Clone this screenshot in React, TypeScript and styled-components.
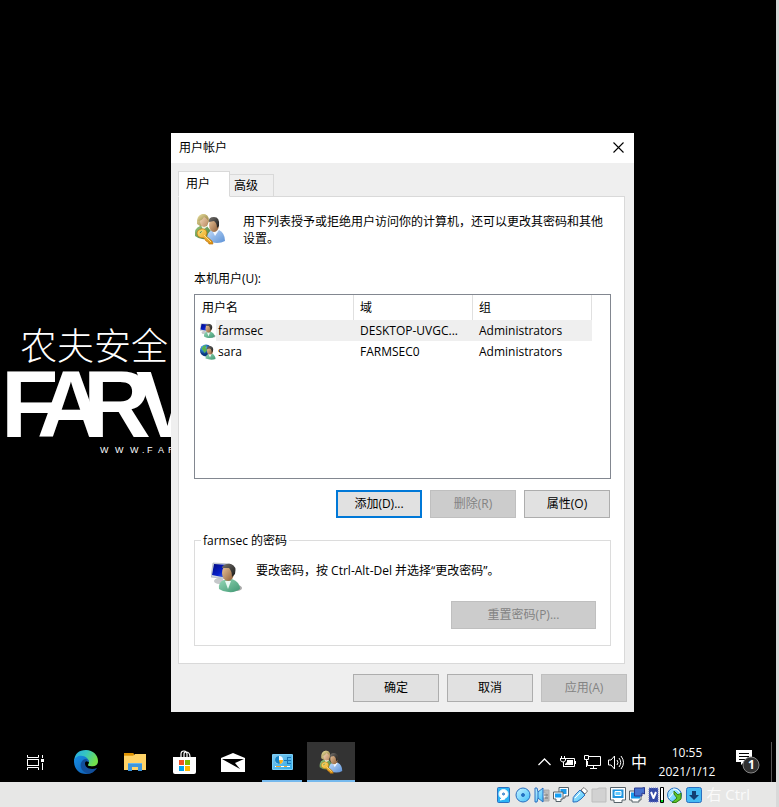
import React, { useState } from "react";
import styled, { createGlobalStyle, css } from "styled-components";

const GlobalStyle = createGlobalStyle`
  *, *::before, *::after { box-sizing: border-box; }
  body {
    margin: 0;
    background: #000;
    font-family: "Open Sans", "Noto Sans CJK SC", sans-serif;
    font-size: 12px;
    line-height: 17px;
    color: #000;
  }
  button { font: inherit; color: inherit; }
  svg { display: block; flex: none; }
`;

/* ---------- frame ---------- */

const Screen = styled.div`
  display: flex;
  flex-direction: column;
  min-height: 100vh;
  background: #000;
  border-right: 3px solid #d9d9d9;
`;

const Desktop = styled.main`
  position: relative;
  flex: 1;
  overflow: hidden;
`;

const Wallpaper = styled.svg`
  position: absolute;
  left: 0;
  top: 300px;
`;

const WallpaperText = styled.text<{ $size: number; $weight: number; $cjk?: boolean }>`
  font-family: ${(p) => (p.$cjk ? '"Noto Sans CJK SC"' : '"Liberation Sans"')}, sans-serif;
  font-size: ${(p) => p.$size}px;
  font-weight: ${(p) => p.$weight};
  fill: #fff;
`;

/* ---------- dialog ---------- */

const Dialog = styled.section`
  position: absolute;
  left: 171px;
  top: 133px;
  width: 463px;
  display: flex;
  flex-direction: column;
  background: #efefef;
`;

const TitleBar = styled.header`
  display: flex;
  align-items: center;
  justify-content: space-between;
  height: 30px;
  padding: 0 1px 2px 8px;
  background: #fff;
`;

const Title = styled.h1`
  margin: 0;
  font-size: 12px;
  font-weight: 400;
`;

const CloseButton = styled.button`
  display: flex;
  align-items: center;
  justify-content: center;
  width: 29px;
  height: 28px;
  padding: 0;
  border: 0;
  background: transparent;
`;

const DialogBody = styled.div`
  display: flex;
  flex-direction: column;
  padding: 8px 7px 10px;
`;

const Tabs = styled.div`
  display: flex;
  align-items: flex-end;
  height: 26px;
`;

const Tab = styled.button<{ $active?: boolean }>`
  display: flex;
  align-items: center;
  height: 23px;
  padding: 0 15px 0 4px;
  border: 1px solid #d9d9d9;
  border-left-width: 0;
  background: #efefef;
  ${(p) =>
    p.$active &&
    css`
      z-index: 1;
      height: 26px;
      padding: 0 19px 1px 7px;
      border-left-width: 1px;
      border-bottom-color: #fff;
      background: #fff;
    `}
`;

const Panel = styled.div`
  display: flex;
  flex-direction: column;
  margin: -1px 2px 0 0;
  padding: 16px 13px 17px 15px;
  border: 1px solid #d9d9d9;
  background: #fff;
`;

const Intro = styled.div`
  display: flex;
  gap: 17px;
  margin-bottom: 23px;
`;

const Paragraph = styled.p`
  margin: 0;
`;

const ListLabel = styled.h2`
  margin: 0 0 7px;
  font-size: 12px;
  font-weight: 400;
`;

const ListBox = styled.div`
  height: 185px;
  border: 1px solid #828790;
  background: #fff;
`;

const UserTable = styled.table`
  width: 397px;
  table-layout: fixed;
  border-collapse: separate;
  border-spacing: 0;
`;

const HeadCell = styled.th<{ $width: number }>`
  width: ${(p) => p.$width}px;
  height: 25px;
  padding: 0 6px;
  border-right: 1px solid #e0e0e0;
  font-weight: 400;
  text-align: left;
  &:first-child { padding-left: 7px; }
`;

const Cell = styled.td<{ $selected: boolean }>`
  height: 21px;
  padding: 0 6px;
  overflow: hidden;
  white-space: nowrap;
  background: ${(p) => (p.$selected ? "#efefef" : "#fff")};
  &:first-child { padding: 0; background: #fff; }
`;

const UserName = styled.div<{ $selected: boolean }>`
  display: flex;
  align-items: center;
  gap: 2px;
  height: 21px;
  margin-left: 5px;
  background: ${(p) => (p.$selected ? "linear-gradient(to right, #fff 16px, #efefef 16px)" : "#fff")};
`;

const ButtonRow = styled.div<{ $place: "list" | "group" | "footer" }>`
  display: flex;
  justify-content: flex-end;
  gap: 8px;
  margin: ${(p) => ({ list: "11px 1px 14px 0", group: "0", footer: "10px 0 0" })[p.$place]};
`;

const PushButton = styled.button<{ $default?: boolean; $wide?: boolean }>`
  width: ${(p) => (p.$wide ? 145 : 86)}px;
  height: 28px;
  padding: 0 0 1px;
  border: ${(p) => (p.$default ? "2px solid #0078d7" : "1px solid #adadad")};
  background: #e1e1e1;
  &:disabled {
    border-color: #bfbfbf;
    background: #ccc;
    color: #838383;
  }
`;

const PasswordGroup = styled.fieldset`
  min-width: 0;
  margin: 0;
  padding: 13px 14px 16px 16px;
  border: 1px solid #dcdcdc;
`;

const Legend = styled.legend`
  margin-left: -10px;
  padding: 0 2px;
`;

const PasswordInfo = styled.div`
  display: flex;
  gap: 13px;
  margin-bottom: 7px;
`;

/* ---------- taskbar ---------- */

const Taskbar = styled.nav`
  display: flex;
  align-items: stretch;
  height: 40px;
  padding-left: 10px;
  background: #000;
  color: #fff;
`;

const TaskButton = styled.button<{ $state?: "open" | "active"; $wide?: boolean }>`
  display: flex;
  align-items: center;
  justify-content: center;
  width: ${(p) => (p.$wide ? 51 : 48)}px;
  margin-right: 1px;
  padding: 0;
  border: 0;
  background: ${(p) =>
    p.$state === "active"
      ? "linear-gradient(to top, #76b9ed 2px, #333 2px)"
      : p.$state === "open"
        ? "linear-gradient(#76b9ed, #76b9ed) center bottom / 40px 2px no-repeat"
        : "transparent"};
`;

const Tray = styled.div`
  display: flex;
  align-items: center;
  margin-left: auto;
`;

const TrayButton = styled.button<{ $width?: number }>`
  display: flex;
  align-items: center;
  justify-content: center;
  width: ${(p) => p.$width ?? 24}px;
  height: 40px;
  padding: 0;
  border: 0;
  background: transparent;
  font-size: 16px;
`;

const Clock = styled.time`
  width: 74px;
  line-height: 19px;
  text-align: center;
`;

const ShowDesktop = styled.button`
  width: 5px;
  height: 40px;
  padding: 0;
  border: 0;
  border-left: 1px solid #555;
  background: #000;
`;

const StatusBar = styled.footer`
  display: flex;
  align-items: center;
  justify-content: flex-end;
  gap: 3px;
  height: 25px;
  padding-right: 26px;
  background: #e7e7e6;
`;

const HostKey = styled.span`
  margin-left: 1px;
  color: #fafafa;
  font-size: 15px;
`;

/* ---------- icons ---------- */

const Defs = () => (
  <svg width="0" height="0" aria-hidden="true">
    <defs>
      <linearGradient id="skin" x1="0" x2="1" y2="1"><stop stopColor="#f0cba0" /><stop offset="1" stopColor="#8a5a34" /></linearGradient>
      <linearGradient id="fair" x1="0" x2="1" y2="1"><stop stopColor="#f8dfc0" /><stop offset="1" stopColor="#b8875f" /></linearGradient>
      <linearGradient id="hair" x1="0" x2="1" y2="1"><stop stopColor="#77736e" /><stop offset="1" stopColor="#171717" /></linearGradient>
      <linearGradient id="blond" x1="0" x2="1" y2="1"><stop stopColor="#ece2a2" /><stop offset="1" stopColor="#917d40" /></linearGradient>
      <linearGradient id="blueShirt" x1="0" x2="1" y2="1"><stop stopColor="#c3dcfa" /><stop offset="1" stopColor="#5b91d6" /></linearGradient>
      <linearGradient id="greenShirt" x1="0" x2="1" y2="1"><stop stopColor="#9bc77c" /><stop offset="1" stopColor="#3f7a42" /></linearGradient>
      <linearGradient id="tealShirt" x1="0" x2="1" y2="1"><stop stopColor="#97d9b7" /><stop offset="1" stopColor="#3f9773" /></linearGradient>
      <linearGradient id="screenBlue" x1="0" x2="1" y2="1"><stop stopColor="#000a80" /><stop offset=".55" stopColor="#0820cc" /><stop offset="1" stopColor="#5b9df5" /></linearGradient>
      <linearGradient id="gold" x1="0" x2="1" y2="1"><stop stopColor="#ffe06b" /><stop offset="1" stopColor="#e08a08" /></linearGradient>
      <linearGradient id="tool" x1="0" x2="1" y2="1"><stop stopColor="#c8f2ff" /><stop offset="1" stopColor="#3fc0fa" /></linearGradient>
      <linearGradient id="edgeTop" x1="0" x2="1" y2=".4"><stop stopColor="#25a8e8" /><stop offset=".5" stopColor="#36c5c0" /><stop offset="1" stopColor="#72e04c" /></linearGradient>
      <linearGradient id="edgeLow" x1="0" x2="1" y2="1"><stop stopColor="#168ee5" /><stop offset="1" stopColor="#0f59ad" /></linearGradient>
      <radialGradient id="globe" cx=".35" cy=".3"><stop stopColor="#bfeaff" /><stop offset=".5" stopColor="#2b83d5" /><stop offset="1" stopColor="#0a377f" /></radialGradient>
    </defs>
  </svg>
);

const UsersKeyIcon = ({ size = 32 }: { size?: number }) => (
  <svg width={size} height={size} viewBox="0 0 32 32">
    <path d="M1 23Q0 15 6 13L12 12L17 18L15 25Q7 28 1 23Z" fill="url(#greenShirt)" />
    <path d="M7 12L9 17L14 13Z" fill="#eef2df" />
    <path d="M3 11Q2 2 9 1Q15 1 15 8L13 13L6 13Z" fill="url(#blond)" />
    <ellipse cx="10" cy="8" rx="4" ry="6" fill="url(#fair)" />
    <path d="M4 8Q8 8 10 4Q12 5 14 7Q14 1 9 1Q4 2 4 8Z" fill="url(#blond)" />
    <path d="M13 28Q12 20 18 17L25 17Q31 20 31 28Q24 32 13 28Z" fill="url(#blueShirt)" />
    <path d="M18 17L21 23L25 17Z" fill="#f3f8ff" />
    <ellipse cx="20" cy="12" rx="5" ry="7" fill="url(#skin)" />
    <path d="M15 9Q14 4 20 4Q26 4 25 13L23 15Q23 10 20 8Z" fill="url(#hair)" />
    <path d="M7 16Q12 15 13 20L12 23L18 28L19 31L15 31L14 29L12 28L10 25Q3 25 3 20Q3 17 7 16Z" fill="url(#gold)" stroke="#ba7610" strokeWidth=".7" />
    <path d="M5 20Q7 17 9 18L6 21Z" fill="#698a3e" stroke="#fff0a0" strokeWidth=".5" />
    <path d="M10 22L17 29" stroke="#fff0a0" strokeWidth=".8" />
  </svg>
);

const PersonMonitorIcon = ({ size = 32 }: { size?: number }) => (
  <svg width={size} height={size} viewBox="0 0 32 32">
    <ellipse cx="8" cy="19" rx="5" ry="3" fill="#c5c8ca" />
    <ellipse cx="26" cy="26" rx="5" ry="3" fill="#aaa" />
    <path d="M2 1L19 2L18 17L0 15Z" fill="#d5dce3" stroke="#9ca5b0" strokeWidth=".6" />
    <path d="M3 2L18 3L16 16L1 13Z" fill="url(#screenBlue)" />
    <path d="M8 27Q7 20 13 18L21 17Q29 20 29 27Q23 32 12 29Z" fill="url(#tealShirt)" />
    <path d="M14 19L17 27L20 19Z" fill="#eafaf3" />
    <ellipse cx="17" cy="11" rx="6" ry="8" fill="url(#skin)" />
    <path d="M11 5Q14 1 20 2Q26 4 24 12L21 15Q21 9 18 6L11 6Z" fill="url(#hair)" />
  </svg>
);

const PersonGlobeIcon = () => (
  <svg width="16" height="16" viewBox="0 0 32 32">
    <circle cx="12" cy="13" r="12" fill="url(#globe)" />
    <path d="M3 9Q8 1 13 3L11 8L15 12L9 18L6 13Z" fill="#58b34f" />
    <path d="M11 29Q11 22 17 20L24 19Q31 23 31 30Q22 33 11 29Z" fill="url(#tealShirt)" />
    <path d="M17 20L20 27L23 20Z" fill="#fff" />
    <ellipse cx="20" cy="14" rx="6" ry="7" fill="url(#skin)" />
    <path d="M13 10Q14 4 21 4Q28 6 26 14L23 18Q24 11 20 9Z" fill="url(#hair)" />
  </svg>
);

const CloseIcon = () => (
  <svg width="11" height="11" viewBox="0 0 11 11"><path d="M.5 .5L10.5 10.5M10.5 .5L.5 10.5" stroke="#000" strokeWidth="1.1" /></svg>
);

const TaskViewIcon = () => (
  <svg width="17" height="17" viewBox="0 0 17 17" fill="none" stroke="#fff">
    <path d="M.5 1V3.5H11.5V1M.5 16V13.5H11.5V16M15.5 1V4M15.5 9V16" />
    <rect x=".5" y="5.5" width="11" height="6" />
    <rect x="14" y="5" width="3" height="3" fill="#fff" stroke="none" />
  </svg>
);

const EdgeIcon = () => (
  <svg width="24" height="24" viewBox="0 0 24 24">
    <path d="M0 11Q1 0 12 0C19 0 24 5 24 11C24 16 20 17 16 16C13 16 14 14 15 13C15 7 6 5 0 11Z" fill="url(#edgeTop)" />
    <path d="M0 11C1 6 8 4 13 8Q15 10 15 12C8 9 6 17 11 21C14 24 18 22 20 21Q17 24 12 24C5 24 0 19 0 11Z" fill="url(#edgeLow)" />
    <path d="M11 9C5 11 5 20 12 23C17 25 21 21 23 18C18 20 11 19 11 13Q11 11 14 10Q13 9 11 9Z" fill="#124f9b" />
  </svg>
);

const FolderIcon = () => (
  <svg width="22" height="18" viewBox="0 0 22 18">
    <path d="M0 0H9L10 2H22V17H0Z" fill="#e6a51e" />
    <path d="M0 3H9L11 1H22V17H0Z" fill="#ffd367" />
    <path d="M0 0H9L10 1V2H0Z" fill="#df9200" />
    <path d="M4 10H18V18H14V14H8V18H4Z" fill="#3e96dc" />
    <path d="M4 10H18V11H4Z" fill="#63b5ef" />
  </svg>
);

const StoreIcon = () => (
  <svg width="23" height="24" viewBox="0 0 23 24">
    <path d="M8 8V4Q8 1 11 1Q14 1 14 4V8M11 8V4Q11 2 13 2Q17 2 17 7" fill="none" stroke="#fff" strokeWidth="1.2" />
    <path d="M0 7H23V22Q23 24 21 24H2Q0 24 0 22Z" fill="#fff" />
    <path d="M6 10H11V15H6Z" fill="#f25022" /><path d="M12 10H17V15H12Z" fill="#7fba00" />
    <path d="M6 16H11V21H6Z" fill="#00a4ef" /><path d="M12 16H17V21H12Z" fill="#ffb900" />
  </svg>
);

const MailIcon = () => (
  <svg width="24" height="19" viewBox="0 0 24 19"><path d="M0 5L12 0L24 5V19H0Z" fill="#fff" /><path d="M1 6H23L14 10L19 16L1 6Z" fill="#000" /></svg>
);

const ControlIcon = () => (
  <svg width="21" height="16" viewBox="0 0 21 16">
    <rect width="21" height="16" rx="1" fill="#79cef9" /><rect x="1" y="1" width="19" height="14" fill="#2492d5" />
    <rect x="1" y="1" width="19" height="14" fill="url(#tool)" opacity=".55" />
    <circle cx="7" cy="6" r="4" fill="#f6fbff" /><path d="M7 6V2Q3 2 3 6Q3 9 7 10L9 9Z" fill="#1383c8" /><path d="M7 6H11Q11 9 8 10Z" fill="#ffb21b" />
    <path d="M15 3.5H19M15 6.5H19M15 9.5H19M12 6.5H16M15.5 3V10" stroke="#1673b8" /><path d="M3 12.5H18" stroke="#fff" /><path d="M4 12.5H9M12 12.5H15" stroke="#f5ac31" />
  </svg>
);

const ChevronIcon = () => (
  <svg width="13" height="8" viewBox="0 0 13 8" fill="none" stroke="#fff" strokeWidth="1.3"><path d="M.5 7L6.5 1L12.5 7" /></svg>
);
const BatteryIcon = () => (
  <svg width="17" height="13" viewBox="0 0 17 13" fill="none" stroke="#fff">
    <path d="M6 2.5H14.5V10.5H3.5V8M15.5 5V8" /><path d="M7 4H13V9H5V8L7 6Z" fill="#fff" stroke="none" /><path d="M1.5 0V2M4.5 0V2M0 2.5H6M.5 3V4Q1 6 3 6Q5 6 5.5 4V3M3.5 6V11" />
  </svg>
);
const NetworkIcon = () => (
  <svg width="17" height="14" viewBox="0 0 17 14" fill="none" stroke="#fff"><path d="M5 1.5H16.5V10.5H3.5V6M9.5 11V13M6 13.5H13M.5 .5H4.5V4.5H.5ZM2.5 5V12" /></svg>
);
const SpeakerIcon = () => (
  <svg width="17" height="15" viewBox="0 0 17 15" fill="none" stroke="#fff"><path d="M.5 5H3L6.5 1V14L3 10H.5ZM9 5Q11 7.5 9 10M11 3Q14.5 7.5 11 12M13 1Q18 7.5 13 14" /></svg>
);
const NotifyIcon = () => (
  <svg width="24" height="24" viewBox="0 0 24 24">
    <path d="M0 0H16V12H8L5 15V12H0Z" fill="#fff" /><path d="M3 3.5H13M3 6.5H13M3 9.5H9" stroke="#000" />
    <circle cx="15" cy="15" r="8" fill="#303030" stroke="#858585" />
    <text x="12" y="19" fill="#fff" fontSize="12" fontWeight="700" fontFamily="Open Sans">1</text>
  </svg>
);

type StatusKind = "disk" | "disc" | "audio" | "network" | "usb" | "folder" | "display" | "record" | "cpu" | "mouse" | "keyboard";

const StatusIcon = ({ kind }: { kind: StatusKind }) => (
  <svg width="16" height="16" viewBox="0 0 16 16" fill="url(#tool)" stroke="#2a6fc0" strokeLinejoin="round">
    {kind === "disk" && <><rect x="1.5" y=".5" width="12" height="15" rx="1" fill="#2bb4f6" /><circle cx="7.5" cy="7" r="4.5" fill="#fff" stroke="#e8f8ff" /><circle cx="7.5" cy="7" r="1" /><path d="M4 13L7 10L9 12Z" fill="#fff" stroke="#fff" /></>}
    {kind === "disc" && <><circle cx="8" cy="8" r="7" /><circle cx="8" cy="8" r="1.5" fill="#1877c8" /></>}
    {kind === "audio" && <><path d="M10 3H15V14H9V11H12V6H10Z" fill="#bbb" stroke="#aaa" /><path d="M10 8H14M11 11H14" stroke="#777" /><path d="M1 1H3L4 5L9 1V15L4 11L3 15H1Z" /><path d="M4 5V11" /></>}
    {kind === "network" && <><path d="M6 .5H15.5V9H12V11H8V9H6Z" fill="#fff" stroke="#566269" /><rect x="7.5" y="2" width="6" height="5" fill="#1e9dec" stroke="none" /><path d="M.5 5H10V12H8V14.5H3V12H.5Z" fill="#fff" stroke="#566269" /><rect x="2" y="6.5" width="6.5" height="4" fill="#18a0f4" stroke="none" /></>}
    {kind === "usb" && <><path d="M1 15Q0 10 4 7L8 3L13 8L9 12Q5 16 1 15Z" /><path d="M9 3L12 .5L15.5 4L13 7Z" fill="#fff" stroke="#777" /><path d="M3 11L8 6" stroke="#fff" /></>}
    {kind === "folder" && <path d="M1 2H6L8 1H15V15H1Z" fill="#d2d2d2" stroke="#bdbdbd" />}
    {kind === "display" && <><path d="M.5 .5H15.5V13H12V15.5H4V13H.5Z" fill="#fff" stroke="#566269" /><rect x="2.5" y="2.5" width="11" height="8.5" fill="#2296df" stroke="none" /><rect x="5" y="4.5" width="6" height="4" fill="#65cbff" stroke="#fff" /></>}
    {kind === "record" && <><path d="M.5 4H12V13H10V15H3V13H.5Z" fill="#fff" stroke="#566269" /><rect x="2" y="5.5" width="9" height="6" fill="#1799ed" stroke="none" /><path d="M5.5 1H13L15.5 .5V7L13 6V9H5.5Z" fill="#4772cf" stroke="#2a368c" /></>}
    {kind === "cpu" && <><rect x="1" y="1" width="9" height="14" fill="#3349a5" stroke="#707ac8" strokeDasharray="1 1" /><path d="M3 5L5.5 11L8 5" fill="none" stroke="#fff" strokeWidth="2" /><rect x="12.5" y=".5" width="3" height="15" fill="#fff" stroke="#000" /><path d="M14 13V15" stroke="#00d421" strokeWidth="2" /></>}
    {kind === "mouse" && <><circle cx="7.5" cy="8" r="7" /><path d="M6 2Q13 2 13 9M2 11L7 5" fill="none" stroke="#fff" /><path d="M7 4L11 8L14 6V12L9 15.5H5L10 11L7 7Z" fill="#5ec328" stroke="#338111" /></>}
    {kind === "keyboard" && <><rect x=".5" y=".5" width="15" height="15" rx="2" fill="#44baf3" /><path d="M6 4H10V8H13L8 13L3 8H6Z" fill="#123f73" stroke="none" /></>}
  </svg>
);

/* ---------- content ---------- */

const users = [
  { name: "farmsec", domain: "DESKTOP-UVGC...", group: "Administrators", local: true },
  { name: "sara", domain: "FARMSEC0", group: "Administrators", local: false },
];

const statusKinds: StatusKind[] = ["disk", "disc", "audio", "network", "usb", "folder", "display", "record", "cpu", "mouse", "keyboard"];

const UserAccounts = () => {
  const [selected, setSelected] = useState("farmsec");
  return (
    <Dialog role="dialog" aria-labelledby="dialog-title">
      <TitleBar>
        <Title id="dialog-title">用户帐户</Title>
        <CloseButton aria-label="关闭"><CloseIcon /></CloseButton>
      </TitleBar>
      <DialogBody>
        <Tabs role="tablist">
          <Tab role="tab" aria-selected="true" $active>用户</Tab>
          <Tab role="tab" aria-selected="false">高级</Tab>
        </Tabs>
        <Panel role="tabpanel">
          <Intro>
            <UsersKeyIcon />
            <Paragraph>用下列表授予或拒绝用户访问你的计算机，还可以更改其密码和其他设置。</Paragraph>
          </Intro>
          <ListLabel id="user-list-label">本机用户(U):</ListLabel>
          <ListBox>
            <UserTable aria-labelledby="user-list-label">
              <thead>
                <tr><HeadCell $width={159}>用户名</HeadCell><HeadCell $width={119}>域</HeadCell><HeadCell $width={119}>组</HeadCell></tr>
              </thead>
              <tbody>
                {users.map((u) => {
                  const on = u.name === selected;
                  return (
                    <tr key={u.name} onClick={() => setSelected(u.name)}>
                      <Cell $selected={on}><UserName $selected={on}>{u.local ? <PersonMonitorIcon size={16} /> : <PersonGlobeIcon />}{u.name}</UserName></Cell>
                      <Cell $selected={on}>{u.domain}</Cell>
                      <Cell $selected={on}>{u.group}</Cell>
                    </tr>
                  );
                })}
              </tbody>
            </UserTable>
          </ListBox>
          <ButtonRow $place="list">
            <PushButton $default>添加(D)...</PushButton>
            <PushButton disabled>删除(R)</PushButton>
            <PushButton>属性(O)</PushButton>
          </ButtonRow>
          <PasswordGroup>
            <Legend>{selected} 的密码</Legend>
            <PasswordInfo>
              <PersonMonitorIcon />
              <Paragraph>要改密码，按 Ctrl-Alt-Del 并选择“更改密码”。</Paragraph>
            </PasswordInfo>
            <ButtonRow $place="group">
              <PushButton $wide disabled>重置密码(P)...</PushButton>
            </ButtonRow>
          </PasswordGroup>
        </Panel>
        <ButtonRow $place="footer">
          <PushButton>确定</PushButton>
          <PushButton>取消</PushButton>
          <PushButton disabled>应用(A)</PushButton>
        </ButtonRow>
      </DialogBody>
    </Dialog>
  );
};

export default function App() {
  return (
    <Screen>
      <GlobalStyle />
      <Desktop>
        <Defs />
        <Wallpaper width="240" height="180" viewBox="0 0 240 180" role="img" aria-label="农夫安全">
          <WallpaperText x="20" y="60" $size={37} $weight={300} $cjk>农夫安全</WallpaperText>
          <WallpaperText x="1 37 83 136" y="137" $size={94} $weight={700}>FARV</WallpaperText>
          <WallpaperText x="100 115 130 142 147 158 168" y="153" $size={9} $weight={400}>WWW.FAR</WallpaperText>
        </Wallpaper>
        <UserAccounts />
      </Desktop>
      <Taskbar aria-label="任务栏">
        <TaskButton $wide aria-label="任务视图"><TaskViewIcon /></TaskButton>
        <TaskButton aria-label="Microsoft Edge"><EdgeIcon /></TaskButton>
        <TaskButton aria-label="文件资源管理器"><FolderIcon /></TaskButton>
        <TaskButton aria-label="Microsoft Store"><StoreIcon /></TaskButton>
        <TaskButton aria-label="邮件"><MailIcon /></TaskButton>
        <TaskButton $state="open" aria-label="控制面板"><ControlIcon /></TaskButton>
        <TaskButton $state="active" aria-label="用户帐户"><UsersKeyIcon size={24} /></TaskButton>
        <Tray>
          <TrayButton aria-label="显示隐藏的图标"><ChevronIcon /></TrayButton>
          <TrayButton aria-label="电源"><BatteryIcon /></TrayButton>
          <TrayButton aria-label="网络"><NetworkIcon /></TrayButton>
          <TrayButton aria-label="音量"><SpeakerIcon /></TrayButton>
          <TrayButton $width={22}>中</TrayButton>
          <Clock dateTime="2021-01-12T10:55">10:55<br />2021/1/12</Clock>
          <TrayButton $width={47} aria-label="通知"><NotifyIcon /></TrayButton>
          <ShowDesktop aria-label="显示桌面" />
        </Tray>
      </Taskbar>
      <StatusBar>
        {statusKinds.map((k) => <StatusIcon key={k} kind={k} />)}
        <HostKey>右 Ctrl</HostKey>
      </StatusBar>
    </Screen>
  );
}
